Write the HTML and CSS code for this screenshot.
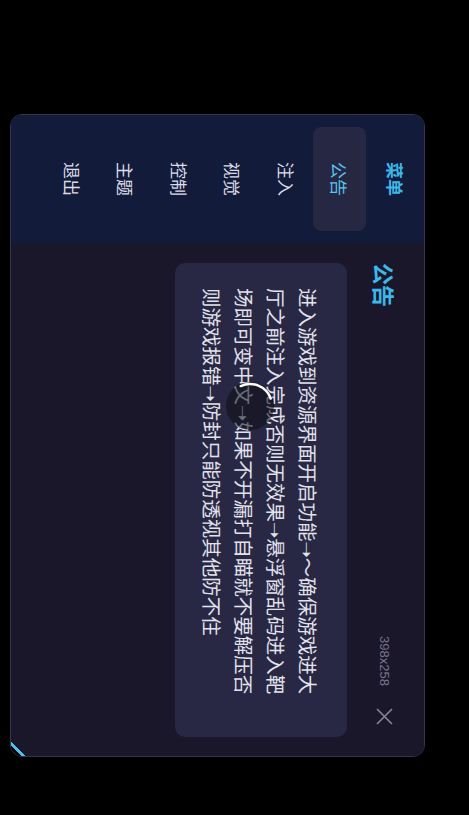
FILE: index.html
```html
<!DOCTYPE html>
<html lang="zh">
<head>
    <meta charset="UTF-8">
    <meta name="viewport" content="width=device-width, initial-scale=1.0">
    <title>菜单</title>
    <link rel="stylesheet" href="styles.css">
</head>
<body>
    <div class="stage">
        <div class="panel">
            <aside class="menu">
                <div class="menu-title">菜单</div>
                <div class="menu-item active">公告</div>
                <div class="menu-item">注入</div>
                <div class="menu-item">视觉</div>
                <div class="menu-item">控制</div>
                <div class="menu-item">主题</div>
                <div class="menu-item">退出</div>
            </aside>
            <main class="content">
                <div class="content-head">
                    <h2>公告</h2>
                    <span class="size">398x258</span>
                    <svg class="close" width="17" height="17" viewBox="0 0 17 17">
                        <path d="M1 1L16 16M16 1L1 16" stroke="#85859a" stroke-width="1.6" fill="none"/>
                    </svg>
                </div>
                <div class="notice">进入游戏到资源界面开启功能<span class="arrow">➝</span>～确保游戏进大厅之前注入完成否则无效果<span class="arrow">➝</span>悬浮窗乱码进入靶场即可变中文<span class="arrow">➝</span>如果不开漏打自瞄就不要解压否则游戏报错<span class="arrow">➝</span>防封只能防透视其他防不住</div>
            </main>
            <div class="grip"></div>
        </div>

        <div class="touch">
            <svg width="48" height="48" viewBox="0 0 48 48">
                <path d="M14.7 4.06A22 22 0 0 1 44.67 16.48" stroke="#fff" stroke-width="2.5" fill="none" stroke-linecap="round"/>
            </svg>
        </div>
    </div>
</body>
</html>
```

FILE: styles.css
```css
html, body {
    margin: 0;
    height: 100%;
    overflow: hidden;
    background-color: #000;
    font-family: "Noto Sans CJK SC", "DejaVu Sans", sans-serif;
}
.stage {
    position: relative;
    width: 469px;
    height: 815px;
    overflow: hidden;
}
.panel {
    position: relative;
    display: flex;
    width: 643px;
    height: 415px;
    box-sizing: border-box;
    border: 1px solid #34344c;
    border-radius: 12px;
    overflow: hidden;
    transform-origin: 0 0;
    transform: translate(425px, 114px) rotate(90deg);
}
.menu {
    width: 128px;
    padding: 0 12px;
    box-sizing: border-box;
    background-color: #121b3a;
    display: flex;
    flex-direction: column;
}
.menu-title {
    height: 58px;
    line-height: 58px;
    text-align: center;
    font-size: 17px;
    font-weight: bold;
    color: #3cb8ea;
}
.menu-item {
    height: 53.4px;
    line-height: 53.4px;
    text-align: center;
    font-size: 17px;
    color: #dcdce6;
    border-radius: 8px;
}
.menu-item.active {
    background-color: #262742;
    color: #5cc2ee;
}
.content {
    flex: 1;
    background-color: #1b172a;
    padding: 19px 19px 0 20px;
    display: flex;
    flex-direction: column;
}
.content-head {
    display: flex;
    align-items: center;
    height: 40px;
}
.content-head h2 {
    margin: 0;
    font-size: 22px;
    font-weight: bold;
    color: #3cb8ea;
}
.size {
    margin-left: auto;
    font-family: "Liberation Sans", sans-serif;
    font-size: 13px;
    color: #75758a;
}
.close {
    margin-left: 22px;
    margin-right: 12px;
}
.notice {
    margin-top: 18px;
    height: 172px;
    box-sizing: border-box;
    padding: 23px 36px 0 25px;
    background-color: #282844;
    border-radius: 10px;
    font-size: 19.5px;
    line-height: 32px;
    color: #e2e2ec;
}
.arrow {
    font-family: "DejaVu Sans", sans-serif;
    line-height: 1;
}
.grip {
    position: absolute;
    right: -1px;
    bottom: -1px;
    width: 16px;
    height: 16px;
    background: linear-gradient(135deg, transparent 48%, #4cc3ee 48%, #4cc3ee 62%, #000 62%);
}
.touch {
    position: absolute;
    left: 226px;
    top: 382px;
    width: 48px;
    height: 48px;
    border-radius: 50%;
    background-color: rgba(12, 12, 22, 0.55);
}
.touch svg {
    display: block;
}
```
